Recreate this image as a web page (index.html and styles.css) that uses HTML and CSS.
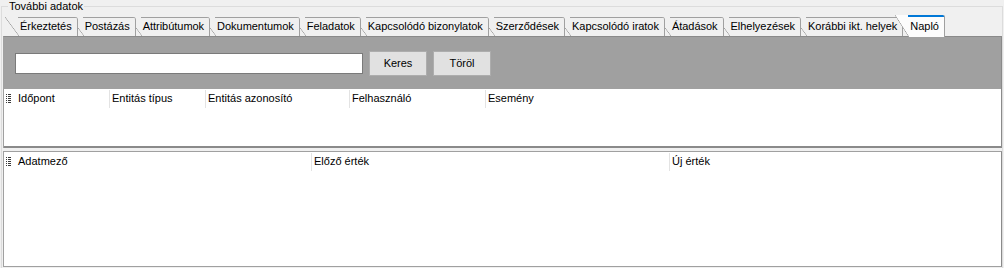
FILE: index.html
```html
<!DOCTYPE html>
<html lang="hu">
<head>
  <meta charset="UTF-8">
  <title>További adatok</title>
  <link rel="stylesheet" href="styles.css">
</head>
<body>
  <fieldset class="group">
    <legend>További adatok</legend>
    <div class="tabs">
      <div class="tab" style="z-index: 12">Érkeztetés</div>
      <div class="tab" style="z-index: 11">Postázás</div>
      <div class="tab" style="z-index: 10">Attribútumok</div>
      <div class="tab" style="z-index: 9">Dokumentumok</div>
      <div class="tab" style="z-index: 8">Feladatok</div>
      <div class="tab" style="z-index: 7">Kapcsolódó bizonylatok</div>
      <div class="tab" style="z-index: 6">Szerződések</div>
      <div class="tab" style="z-index: 5">Kapcsolódó iratok</div>
      <div class="tab" style="z-index: 4">Átadások</div>
      <div class="tab" style="z-index: 3">Elhelyezések</div>
      <div class="tab" style="z-index: 2">Korábbi ikt. helyek</div>
      <div class="tab active" style="z-index: 13">Napló</div>
    </div>
    <div class="tab-body">
      <div class="search">
        <input type="text" class="search-input">
        <button class="button">Keres</button>
        <button class="button">Töröl</button>
      </div>
      <div class="grid grid-log">
        <div class="grid-head">
          <div class="cell icon-cell">
            <svg width="5" height="9" viewBox="0 0 5 9"><path d="M0 0h1v1H0zM2 0h3v1H2zM0 2h1v1H0zM2 2h3v1H2zM0 4h1v1H0zM2 4h3v1H2zM0 6h1v1H0zM2 6h3v1H2zM0 8h1v1H0zM2 8h3v1H2z" fill="#3a3a3a"/></svg>
          </div>
          <div class="cell">Időpont</div>
          <div class="cell">Entitás típus</div>
          <div class="cell">Entitás azonosító</div>
          <div class="cell">Felhasználó</div>
          <div class="cell last">Esemény</div>
        </div>
      </div>
    </div>
    <div class="grid grid-detail">
      <div class="grid-head">
        <div class="cell icon-cell">
          <svg width="5" height="9" viewBox="0 0 5 9"><path d="M0 0h1v1H0zM2 0h3v1H2zM0 2h1v1H0zM2 2h3v1H2zM0 4h1v1H0zM2 4h3v1H2zM0 6h1v1H0zM2 6h3v1H2zM0 8h1v1H0zM2 8h3v1H2z" fill="#3a3a3a"/></svg>
        </div>
        <div class="cell">Adatmező</div>
        <div class="cell">Előző érték</div>
        <div class="cell last">Új érték</div>
      </div>
    </div>
  </fieldset>
</body>
</html>
```

FILE: styles.css
```css
body {
  margin: 0;
  background-color: #f0f0f0;
  font-family: "Liberation Sans", Arial, sans-serif;
  font-size: 11px;
  color: #000;
}
.group {
  margin: 0 1px;
  padding: 0 0 1px 1px;
  border: 1px solid #dcdcdc;
}
.group legend {
  margin-left: 5px;
  padding: 0 1px;
  font-size: 11px;
  line-height: 13px;
}
.tabs {
  display: flex;
  height: 21px;
  padding-left: 2px;
  margin-top: 2px;
  align-items: flex-end;
}
.tab {
  position: relative;
  height: 19px;
  line-height: 18px;
  padding: 0 5px 0 15px;
  margin-left: -8px;
  letter-spacing: -0.03px;
  border-right: 1px solid #a0a0a0;
  border-top-right-radius: 3px;
  background:
    linear-gradient(#a0a0a0, #a0a0a0) 13px 0 / 100% 1px no-repeat,
    linear-gradient(to top right, transparent calc(50% - 0.6px), #a0a0a0 50%, #f0f0f0 calc(50% + 0.6px)) 0 0 / 14px 100% no-repeat,
    linear-gradient(#f0f0f0, #f0f0f0) 14px 0 / 100% 100% no-repeat;
  box-sizing: border-box;
  white-space: nowrap;
}
.tab:first-child {
  margin-left: 0;
}
.tab.active {
  height: 22px;
  margin-bottom: -1px;
  line-height: 22px;
  border-top-right-radius: 2px;
  background:
    linear-gradient(#0078d7, #0078d7) 13px 0 / 100% 2px no-repeat,
    linear-gradient(to top right, transparent calc(50% - 0.6px), #a0a0a0 50%, #fcfcfc calc(50% + 0.6px)) 0 0 / 14px 100% no-repeat,
    linear-gradient(#fcfcfc, #fcfcfc) 14px 0 / 100% 100% no-repeat;
}
.tab-body {
  border-top: 1px solid #8a8a8a;
  border-right: 1px solid #8a8a8a;
  border-left: 1px solid #a0a0a0;
}
.search {
  display: flex;
  align-items: center;
  height: 52px;
  padding-left: 11px;
  background-color: #a0a0a0;
}
.search-input {
  width: 348px;
  height: 21px;
  margin: 0;
  border: 1px solid #7a7a7a;
  box-sizing: border-box;
  background-color: #fff;
}
.button {
  width: 58px;
  height: 25px;
  margin: 0 0 0 6px;
  padding: 0;
  border: 1px solid #adadad;
  background-color: #e1e1e1;
  font-family: inherit;
  font-size: 11px;
  color: #000;
}
.grid {
  background-color: #fff;
}
.grid-log {
  height: 57px;
  border-bottom: 2px solid #8a8a8a;
}
.grid-detail {
  height: 114px;
  margin-top: 3px;
  border: 1px solid #a0a0a0;
  border-right-color: #8a8a8a;
}
.grid-head {
  display: flex;
  height: 18px;
  padding-top: 1px;
}
.cell {
  padding: 0 2px;
  line-height: 17px;
  border-right: 1px solid #e3e3e3;
  box-sizing: border-box;
  white-space: nowrap;
}
.cell.last {
  border-right: none;
}
.icon-cell {
  width: 12px;
  padding: 4px 0 0 2px;
  border-right: none;
  line-height: 0;
}
.grid-log .cell:nth-child(2) { width: 94px; }
.grid-log .cell:nth-child(3) { width: 96px; }
.grid-log .cell:nth-child(4) { width: 144px; }
.grid-log .cell:nth-child(5) { width: 136px; }
.grid-detail .cell:nth-child(2) { width: 296px; }
.grid-detail .cell:nth-child(3) { width: 358px; }
```
